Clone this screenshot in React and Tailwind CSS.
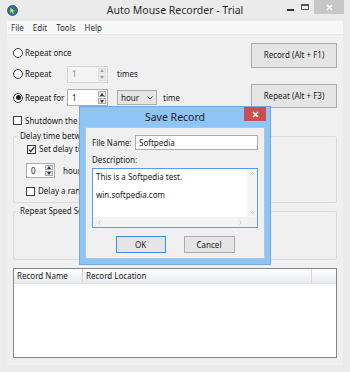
import React from "react";

function Radio({ checked, label }) {
  return (
    <div className="flex items-center gap-[2px]">
      <span className="w-[10px] h-[10px] rounded-full border border-[#3a3a3a] bg-white flex items-center justify-center">
        {checked && <span className="w-[5px] h-[5px] rounded-full bg-[#1e1e1e]" />}
      </span>
      <span>{label}</span>
    </div>
  );
}

function Check({ checked, label }) {
  return (
    <div className="flex items-center gap-[3px] whitespace-nowrap">
      <span className="w-[9px] h-[9px] border border-[#3a3a3a] bg-white flex items-center justify-center">
        {checked && (
          <svg width="7" height="7" viewBox="0 0 7 7">
            <path d="M0.8 3.6 L2.7 5.5 L6.2 1.2" fill="none" stroke="#1e1e1e" strokeWidth="1.3" />
          </svg>
        )}
      </span>
      <span>{label}</span>
    </div>
  );
}

function Spin({ value, disabled, small }) {
  return (
    <div
      className={
        (small ? "w-[29px] h-[15px] " : "w-[41px] h-[17px] ") +
        "flex border " +
        (disabled ? "border-[#d5d5d5] bg-[#f4f4f4] text-[#8a8a8a]" : "border-[#abadb3] bg-white")
      }
    >
      <div className="flex-1 pl-[4px] flex items-center">{value}</div>
      <div className="w-[10px] flex flex-col gap-[1px] p-[1px]">
        <div className={"flex-1 flex items-center justify-center border " + (disabled ? "border-[#dcdcdc] bg-[#ececec]" : "border-[#acacac] bg-[#e6e6e6]")}>
          <svg width="4" height="3" viewBox="0 0 4 3"><path d="M0 3 L2 0 L4 3 Z" fill={disabled ? "#a0a0a0" : "#333"} /></svg>
        </div>
        <div className={"flex-1 flex items-center justify-center border " + (disabled ? "border-[#dcdcdc] bg-[#ececec]" : "border-[#acacac] bg-[#e6e6e6]")}>
          <svg width="4" height="3" viewBox="0 0 4 3"><path d="M0 0 L2 3 L4 0 Z" fill={disabled ? "#a0a0a0" : "#333"} /></svg>
        </div>
      </div>
    </div>
  );
}

function WinButton({ children }) {
  return (
    <div className="w-[86px] h-[25px] border border-[#acacac] bg-[#e5e5e5] flex items-center justify-center">
      {children}
    </div>
  );
}

export default function App() {
  return (
    <div className="w-[350px] h-[372px] bg-[#ebebeb] relative overflow-hidden flex flex-col text-[8px] leading-[10px] text-[#1a1a1a] [font-family:'Noto_Sans','DejaVu_Sans',sans-serif]">
      {/* title bar */}
      <div className="h-[21px] grid grid-cols-[1fr_auto_1fr] items-center">
        <div className="pl-[7px] flex items-center">
          <svg width="11" height="11" viewBox="0 0 11 11">
            <circle cx="5.5" cy="5.5" r="5" fill="#2e6f9e" stroke="#24506f" strokeWidth="0.8" />
            <path d="M3.4 2.4 L3.4 8.2 L4.8 6.8 L5.9 8.9 L6.9 8.4 L5.9 6.4 L7.8 6.3 Z" fill="#c6ec2c" />
          </svg>
        </div>
        <div className="text-[10.5px] leading-[12px] text-[#2b2b2b] -mt-[1px]">Auto Mouse Recorder - Trial</div>
        <div className="flex justify-end items-start self-start h-full">
          <div className="w-[18px] h-[14px] flex items-center justify-center">
            <span className="w-[7px] h-[2px] bg-[#333] mt-[5px]" />
          </div>
          <div className="w-[12px] h-[14px] flex items-start justify-center pt-[4px]">
            <span className="w-[8px] h-[6px] border border-[#555] border-t-2" />
          </div>
          <div className="w-[30px] h-[14px] bg-[#c7c7c7] flex items-center justify-center mr-[6px] ml-[3px]">
            <svg width="7" height="7" viewBox="0 0 7 7">
              <path d="M1 1 L6 6 M6 1 L1 6" stroke="#fff" strokeWidth="1.5" />
            </svg>
          </div>
        </div>
      </div>

      <div className="flex-1 px-[7px] pb-[7px] flex flex-col">
        {/* menu bar */}
        <div className="h-[14px] bg-[#f6f7f8] border-b border-[#e6e6e6] flex items-center gap-[9px] pl-[4px] text-[#333]">
          <span>File</span>
          <span>Edit</span>
          <span>Tools</span>
          <span>Help</span>
        </div>

        {/* client */}
        <div className="flex-1 bg-[#f0f0f0] px-[6px] pb-[7px] flex flex-col">
          <div className="flex justify-between h-[73px]">
            <div className="flex flex-col pt-[10px]">
              <div className="h-[16px] flex items-center">
                <Radio label="Repeat once" />
              </div>
              <div className="h-[16px] mt-[5px] flex items-center">
                <div className="w-[54px]">
                  <Radio label="Repeat" />
                </div>
                <Spin value="1" disabled />
                <span className="ml-[9px]">times</span>
              </div>
              <div className="h-[17px] mt-[7px] flex items-center">
                <div className="w-[54px]">
                  <Radio checked label="Repeat for" />
                </div>
                <Spin value="1" />
                <div className="ml-[9px] w-[40px] h-[15px] border border-[#acacac] bg-[#e5e5e5] flex items-center justify-between px-[3px]">
                  <span>hour</span>
                  <svg width="6" height="4" viewBox="0 0 6 4">
                    <path d="M0.5 0.5 L3 3 L5.5 0.5" fill="none" stroke="#333" strokeWidth="1" />
                  </svg>
                </div>
                <span className="ml-[6px]">time</span>
              </div>
            </div>
            <div className="flex flex-col pt-[8px] gap-[16px]">
              <WinButton>Record (Alt + F1)</WinButton>
              <WinButton>Repeat (Alt + F3)</WinButton>
            </div>
          </div>

          <div className="h-[15px] mt-[5px] flex items-center">
            <Check label="Shutdown the computer when finished" />
          </div>

          <fieldset className="mt-[3px] h-[72px] border border-[#dcdcdc] rounded-[2px] p-0 min-w-0">
            <legend className="ml-[4px] px-[2px] leading-[10px] whitespace-nowrap">Delay time between repeats</legend>
            <div className="flex flex-col pl-[13px]">
              <div className="h-[12px] mt-[2px] flex items-center">
                <Check checked label="Set delay time" />
              </div>
              <div className="h-[15px] mt-[8px] flex items-center -ml-[1px]">
                <Spin value="0" small />
                <span className="ml-[8px]">hour</span>
              </div>
              <div className="h-[12px] mt-[7px] flex items-center -ml-[1px]">
                <Check label="Delay a random time" />
              </div>
            </div>
          </fieldset>

          <fieldset className="mt-[3px] h-[54px] border border-[#dcdcdc] rounded-[2px] p-0 min-w-0">
            <legend className="ml-[4px] px-[2px] leading-[10px] whitespace-nowrap">Repeat Speed Setting</legend>
          </fieldset>

          {/* list view */}
          <div className="mt-[8px] flex-1 border border-[#828790] bg-white flex flex-col">
            <div className="h-[15px] flex bg-gradient-to-b from-[#ffffff] to-[#e9ebee] border-b border-[#e2e3e5] text-[#222]">
              <div className="w-[69px] border-r border-[#d5d5d5] flex items-center pl-[3px]">Record Name</div>
              <div className="w-[229px] border-r border-[#d5d5d5] flex items-center pl-[3px]">Record Location</div>
              <div className="flex-1" />
            </div>
          </div>
        </div>
      </div>

      {/* Save Record dialog */}
      <div className="absolute left-[79px] top-[106px] w-[192px] h-[159px] bg-[#8ec4f6] border border-[#6fa9de] flex flex-col">
        <div className="h-[20px] relative flex items-center justify-center">
          <span className="text-[10.5px] leading-[12px] text-[#1e1e1e]">Save Record</span>
          <div className="absolute right-[4px] top-0 w-[22px] h-[14px] bg-[#c75050] flex items-center justify-center">
            <svg width="7" height="7" viewBox="0 0 7 7">
              <path d="M1 1 L6 6 M6 1 L1 6" stroke="#fff" strokeWidth="1.5" />
            </svg>
          </div>
        </div>
        <div className="flex-1 mx-[5px] mb-[5px] bg-[#f0f0f0] border border-[#a9c9ea] flex flex-col px-[6px]">
          <div className="mt-[7px] h-[15px] flex items-center justify-between">
            <span>File Name:</span>
            <div className="w-[123px] h-[15px] border border-[#abadb3] bg-white flex items-center pl-[3px]">Softpedia</div>
          </div>
          <div className="mt-[5px] h-[10px] flex items-center">Description:</div>
          <div className="mt-[3px] h-[60px] border border-[#5a9ee0] bg-white flex flex-col">
            <div className="flex-1 flex">
              <div className="flex-1 pl-[3px] pt-[3px] flex flex-col gap-[8px]">
                <span>This is a Softpedia test.</span>
                <span>win.softpedia.com</span>
              </div>
              <div className="w-[10px] bg-[#f4f4f4] flex flex-col justify-between items-center py-[3px]">
                <svg width="5" height="3" viewBox="0 0 5 3"><path d="M0.5 2.5 L2.5 0.5 L4.5 2.5" fill="none" stroke="#c0c0c0" strokeWidth="0.9" /></svg>
                <svg width="5" height="3" viewBox="0 0 5 3"><path d="M0.5 0.5 L2.5 2.5 L4.5 0.5" fill="none" stroke="#c0c0c0" strokeWidth="0.9" /></svg>
              </div>
            </div>
            <div className="h-[10px] flex">
              <div className="flex-1 bg-[#f4f4f4] flex justify-between items-center px-[5px]">
                <svg width="3" height="5" viewBox="0 0 3 5"><path d="M2.5 0.5 L0.5 2.5 L2.5 4.5" fill="none" stroke="#c0c0c0" strokeWidth="0.9" /></svg>
                <svg width="3" height="5" viewBox="0 0 3 5"><path d="M0.5 0.5 L2.5 2.5 L0.5 4.5" fill="none" stroke="#c0c0c0" strokeWidth="0.9" /></svg>
              </div>
              <div className="w-[10px] bg-[#f0f0f0]" />
            </div>
          </div>
          <div className="mt-[8px] flex justify-center gap-[18px]">
            <div className="w-[50px] h-[17px] border border-[#3c8ee0] bg-[#e5e5e5] flex items-center justify-center">OK</div>
            <div className="w-[51px] h-[17px] border border-[#acacac] bg-[#e5e5e5] flex items-center justify-center">Cancel</div>
          </div>
        </div>
      </div>
    </div>
  );
}
